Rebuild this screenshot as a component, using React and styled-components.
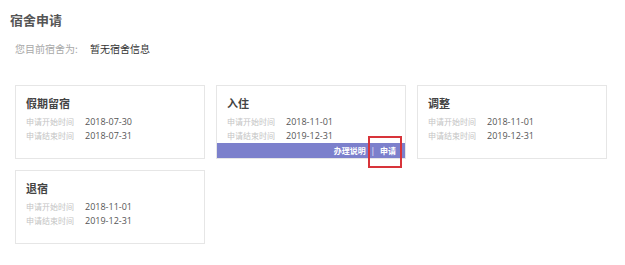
import React from 'react';
import styled, { createGlobalStyle } from 'styled-components';

const GlobalStyle = createGlobalStyle`
  body {
    margin: 0;
    background: #fff;
    font-family: "Open Sans", "Noto Sans CJK SC", sans-serif;
  }
`;

const items = [
  { title: '假期留宿', start: '2018-07-30', end: '2018-07-31' },
  { title: '入住', start: '2018-11-01', end: '2019-12-31', active: true },
  { title: '调整', start: '2018-11-01', end: '2019-12-31' },
  { title: '退宿', start: '2018-11-01', end: '2019-12-31' },
];

const App = () => {
  return (
    <Page>
      <GlobalStyle />
      <Heading>宿舍申请</Heading>
      <Current>
        <CurrentLabel>您目前宿舍为:</CurrentLabel>
        <CurrentValue>暂无宿舍信息</CurrentValue>
      </Current>
      <CardGrid>
        {items.map((item) => (
          <Card key={item.title}>
            <CardBody>
              <CardTitle>{item.title}</CardTitle>
              <InfoRow>
                <InfoLabel>申请开始时间</InfoLabel>
                <InfoValue>{item.start}</InfoValue>
              </InfoRow>
              <InfoRow>
                <InfoLabel>申请结束时间</InfoLabel>
                <InfoValue>{item.end}</InfoValue>
              </InfoRow>
            </CardBody>
            {item.active && (
              <ActionBar>
                <Action>办理说明</Action>
                <Divider>|</Divider>
                <Action highlighted>申请</Action>
              </ActionBar>
            )}
          </Card>
        ))}
      </CardGrid>
    </Page>
  );
};

const Page = styled.div`
  width: 625px;
  height: 265px;
  padding: 11px 0 0 10px;
  box-sizing: border-box;
`;

const Heading = styled.h1`
  margin: 0;
  font-family: "Noto Sans CJK SC", sans-serif;
  font-size: 13px;
  line-height: 18px;
  font-weight: 700;
  color: #555;
`;

const Current = styled.div`
  display: flex;
  align-items: center;
  margin: 13px 0 0 5px;
  font-family: "Noto Sans CJK SC", sans-serif;
  font-size: 10px;
  line-height: 14px;
`;

const CurrentLabel = styled.span`
  color: #a8a8a8;
  width: 75px;
`;

const CurrentValue = styled.span`
  color: #333;
`;

const CardGrid = styled.div`
  display: grid;
  grid-template-columns: repeat(3, 190px);
  column-gap: 11px;
  row-gap: 11px;
  margin: 29px 0 0 5px;
`;

const Card = styled.div`
  position: relative;
  display: flex;
  flex-direction: column;
  height: 74px;
  border: 1px solid #e6e6e6;
  box-sizing: border-box;
  background: #fff;
`;

const CardBody = styled.div`
  padding: 10px 0 0 10px;
`;

const CardTitle = styled.div`
  font-family: "Noto Sans CJK SC", sans-serif;
  font-size: 11px;
  line-height: 14px;
  font-weight: 700;
  color: #444;
  margin-bottom: 5px;
`;

const InfoRow = styled.div`
  display: flex;
  align-items: center;
  height: 13px;
  margin-bottom: 1px;
`;

const InfoLabel = styled.span`
  width: 59px;
  font-family: "Noto Sans CJK SC", sans-serif;
  font-size: 8px;
  color: #c4c4c4;
`;

const InfoValue = styled.span`
  font-size: 9px;
  color: #555;
`;

const ActionBar = styled.div`
  margin-top: auto;
  height: 19px;
  background: #7c80cc;
  display: flex;
  align-items: center;
  justify-content: flex-end;
  padding-right: 9px;
  font-family: "Noto Sans CJK SC", sans-serif;
  font-size: 8px;
  font-weight: 700;
  color: #fff;
`;

const Action = styled.span`
  position: relative;
  ${({ highlighted }) =>
    highlighted &&
    `
    &::after {
      content: '';
      position: absolute;
      left: -12px;
      top: -9px;
      width: 30px;
      height: 28px;
      border: 2px solid #d8343a;
    }
  `}
`;

const Divider = styled.span`
  margin: 0 6px;
  font-weight: 400;
`;

export default App;
